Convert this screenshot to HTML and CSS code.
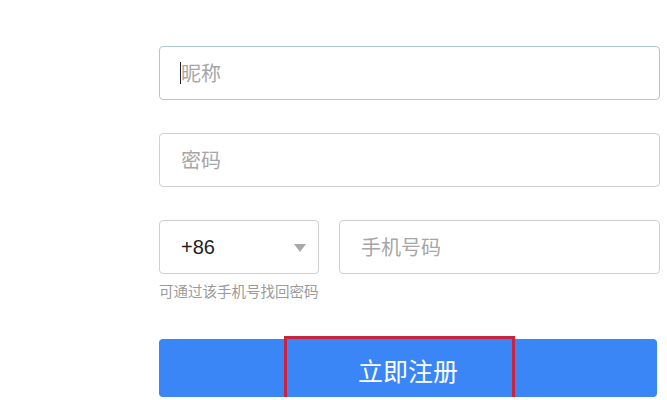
FILE: index.html
```html
<!DOCTYPE html>
<html lang="zh-CN">
<head>
<meta charset="utf-8">
<title>注册</title>
<link rel="stylesheet" href="styles.css">
</head>
<body>
<div class="form">
  <div class="field focused"><span class="caret"></span><span class="ph">昵称</span></div>
  <div class="field"><span class="ph">密码</span></div>
  <div class="row">
    <div class="field select"><span class="code">+86</span><span class="arrow"></span></div>
    <div class="field phone"><span class="ph">手机号码</span></div>
  </div>
  <div class="hint">可通过该手机号找回密码</div>
  <div class="btn-wrap">
    <div class="btn">立即注册</div>
    <div class="mark"></div>
  </div>
</div>
</body>
</html>
```
FILE: styles.css
```css
html, body {
  margin: 0;
  padding: 0;
  background: #ffffff;
  overflow: hidden;
}
body {
  font-family: "Noto Sans CJK SC", "Noto Sans", sans-serif;
}
.form {
  width: 501px;
  margin-left: 159px;
  padding-top: 46px;
}
.field {
  box-sizing: border-box;
  height: 54px;
  border: 1px solid #cfcfcf;
  border-radius: 4px;
  display: flex;
  align-items: center;
  padding-left: 21px;
  margin-bottom: 33px;
  background: #fff;
}
.field.focused {
  border-color: #a9c9d9;
}
.ph {
  font-size: 20px;
  color: #a6a6a6;
  line-height: 1;
}
.caret {
  width: 1px;
  height: 22px;
  background: #222;
  margin-left: -1px;
}
.row {
  display: flex;
  gap: 20px;
  margin-top: 1px;
}
.row .field {
  margin-bottom: 0;
}
.select {
  width: 160px;
  flex: none;
  justify-content: space-between;
  padding-right: 12px;
}
.code {
  font-family: "Liberation Sans", Arial, sans-serif;
  font-size: 20px;
  color: #222;
}
.arrow {
  width: 0;
  height: 0;
  border-left: 6px solid transparent;
  border-right: 6px solid transparent;
  border-top: 8px solid #a9a9a9;
  margin-top: 2px;
}
.phone {
  flex: 1;
}
.hint {
  margin-top: 7px;
  font-size: 14.5px;
  line-height: 20px;
  color: #9a9a9a;
}
.btn-wrap {
  position: relative;
  margin-top: 38px;
}
.btn {
  width: 498px;
  height: 58px;
  background: #3a86f6;
  border-radius: 4px;
  color: #fff;
  font-size: 25px;
  display: flex;
  align-items: center;
  justify-content: center;
  padding-top: 4px;
  box-sizing: border-box;
}
.mark {
  position: absolute;
  left: 125px;
  top: -3px;
  width: 231px;
  height: 70px;
  box-sizing: border-box;
  border: 3px solid #c9243d;
}
```
